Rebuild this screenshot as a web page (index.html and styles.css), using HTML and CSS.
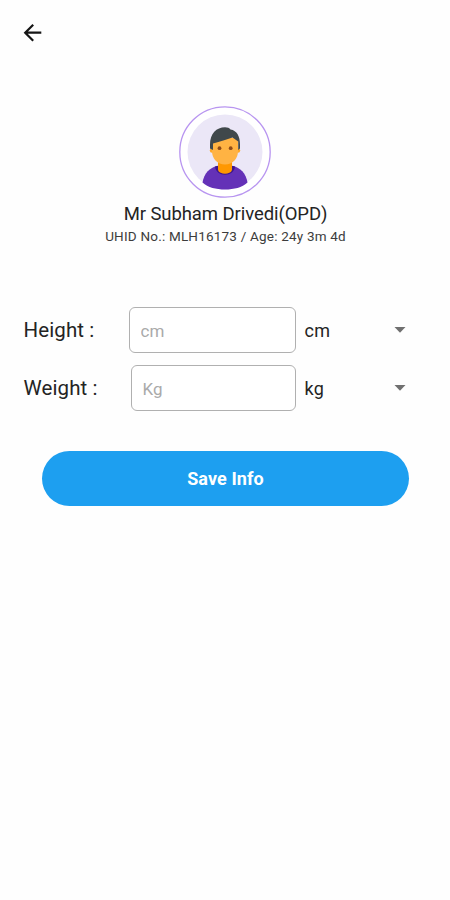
FILE: index.html
```html
<!DOCTYPE html>
<html lang="en">
<head>
<meta charset="utf-8">
<title>Patient vitals</title>
<link rel="stylesheet" href="styles.css">
</head>
<body>
<header class="topbar">
  <svg class="back" viewBox="0 0 20 20" width="20" height="20" role="button" aria-label="Back"><path d="M18.300 9.700H2M10.200 1.700L2.200 9.700l8 8"/></svg>
</header>
<main>
  <section class="profile">
    <svg class="avatar" viewBox="0 0 92 92" width="92" height="92">
      <circle cx="46" cy="46" r="45.200" fill="#fff" stroke="#b895f0" stroke-width="1.300"/>
      <circle cx="46" cy="46" r="37.500" fill="#ebe7f7"/>
      <path d="M23.500 76.500C25 67 31 61.500 38 60h16c7 1.500 13 7 14.500 16.500C63 81.500 55 83.500 46 83.500S29 81.500 23.500 76.500z" fill="#6431b7"/>
      <path d="M36 60.500c1 11 19 11 20 0l-3-.8H39z" fill="#3c168c"/>
      <path d="M39 54h14v10c-1.500 5-12.500 5-14 0z" fill="#ff9800"/>
      <circle cx="33" cy="44.500" r="2.200" fill="#ffa726"/>
      <circle cx="59" cy="44.500" r="2.200" fill="#ffa726"/>
      <path d="M33 32h26v13c0 8-5.500 13.500-13 13.500S33 53 33 45z" fill="#ffb343"/>
      <path d="M31 42.500v-4C31 27.500 37.500 21.200 46 21.200c2.500 0 4.500.8 5.500 2.200C58 24.500 61 30 61 38.500v4l-1.800 1.500V35.500l-5.700-4c-6 2-12 4-19.500 6V44z" fill="#40484b"/>
      <circle cx="40.500" cy="42.200" r="1.900" fill="#8d4a18"/>
      <circle cx="51.700" cy="42.200" r="1.900" fill="#8d4a18"/>
    </svg>
    <h1 class="name">Mr Subham Drivedi(OPD)</h1>
    <p class="meta">UHID No.: MLH16173 / Age: 24y 3m 4d</p>
  </section>
  <form class="vitals">
    <div class="row">
      <label class="label" for="height">Height :</label>
      <input class="field" id="height" placeholder="cm">
      <span class="unit">cm</span>
      <svg class="caret" viewBox="0 0 12 6" width="12" height="6"><path d="M.5 0h11L6 5.800z"/></svg>
    </div>
    <div class="row row-weight">
      <label class="label" for="weight">Weight :</label>
      <input class="field" id="weight" placeholder="Kg">
      <span class="unit">kg</span>
      <svg class="caret" viewBox="0 0 12 6" width="12" height="6"><path d="M.5 0h11L6 5.800z"/></svg>
    </div>
    <button class="save" type="button">Save Info</button>
  </form>
</main>
</body>
</html>
```
FILE: styles.css
```css
* { box-sizing: border-box; }
body {
  margin: 0;
  height: 900px;
  overflow: hidden;
  background: #fefefe;
  color: #242424;
  font-family: Roboto, sans-serif;
}
.topbar { height: 64px; padding: 23px 0 0 23px; }
.back { display: block; fill: none; stroke: #151515; stroke-width: 2.2; }
.profile {
  display: flex;
  flex-direction: column;
  align-items: center;
  padding: 42px 0 0 1px;
}
.avatar { display: block; margin: -0.5px 0 0.5px -1px; }
.name {
  margin: 5px 0 0;
  font-size: 18.5px;
  font-weight: 400;
  line-height: 22px;
  letter-spacing: -0.08px;
}
.meta { margin: 3px 0 0; font-size: 13.5px; line-height: 16px; letter-spacing: 0.2px; color: #3c3c3c; }
.vitals { padding: 63px 0 0; }
.row {
  display: grid;
  grid-template-columns: 105px 167px 98px 12px;
  align-items: center;
  height: 46px;
  margin-left: 23.5px;
}
.row-weight { grid-template-columns: 107px 165px 98px 12px; margin-top: 12px; }
.label { font-size: 20.5px; letter-spacing: 0.1px; }
.field {
  width: 100%;
  height: 46px;
  padding: 2px 11px 0;
  border: 1px solid #b0b0b0;
  border-radius: 6px;
  background: #fff;
  font: 17px Roboto, sans-serif;
  outline: none;
}
.field::placeholder { color: #aaa; opacity: 1; }
.unit { padding: 1px 0 0 9px; font-size: 18px; letter-spacing: 0.3px; }
.caret { margin-left: 0.5px; fill: #707070; }
.save {
  display: block;
  width: 367px;
  height: 55px;
  margin: 39.5px 0 0 42px;
  padding: 1px 0 0;
  border: 0;
  border-radius: 28px;
  background: #1d9ff0;
  color: #fff;
  font: 700 18px Roboto, sans-serif;
  letter-spacing: 0.1px;
}
```
